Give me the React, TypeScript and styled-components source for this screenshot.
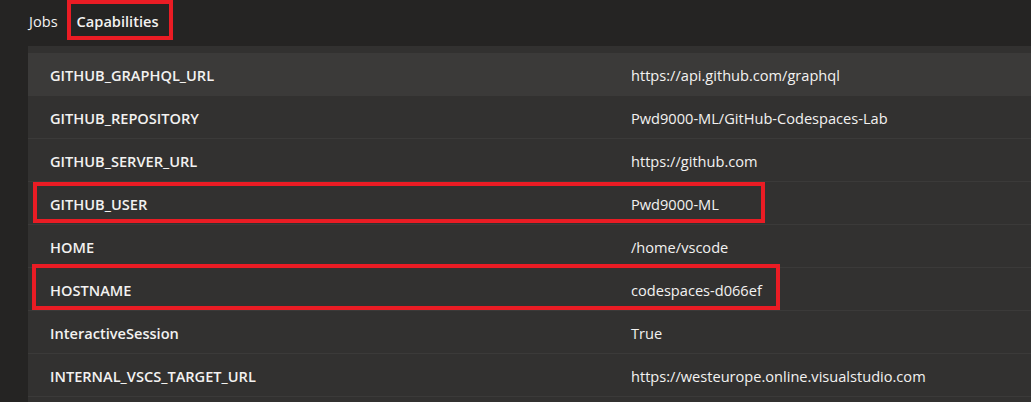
import styled, { createGlobalStyle } from "styled-components";

const GlobalStyle = createGlobalStyle`
  html, body {
    margin: 0;
    padding: 0;
    background: #252423;
    overflow: hidden;
  }
  body {
    font-family: "Open Sans", "Noto Sans", "Liberation Sans", sans-serif;
    color: #f3f2f1;
  }
`;

const Page = styled.div`
  width: 1031px;
  height: 402px;
  background: #252423;
  overflow: hidden;
`;

const Tabs = styled.div`
  display: flex;
  align-items: center;
  height: 46px;
  padding-left: 29px;
  gap: 19px;
`;

const Tab = styled.div<{ $active?: boolean }>`
  position: relative;
  font-size: 14.6px;
  font-weight: ${(p) => (p.$active ? 600 : 400)};
  color: #f3f2f1;
  padding-bottom: 4px;
`;

const Marker = styled.div<{ $top: number; $left: number; $width: number; $height: number }>`
  position: absolute;
  top: ${(p) => p.$top}px;
  left: ${(p) => p.$left}px;
  width: ${(p) => p.$width}px;
  height: ${(p) => p.$height}px;
  border: 4px solid #ea1c24;
  box-sizing: border-box;
  pointer-events: none;
`;

const Panel = styled.div`
  margin-left: 28px;
  background: #323130;
  padding-top: 7px;
  height: 356px;
`;

const Row = styled.div<{ $hover?: boolean }>`
  position: relative;
  display: flex;
  align-items: center;
  height: 42px;
  padding-left: 22px;
  border-bottom: 1px solid #3b3a39;
  background: ${(p) => (p.$hover ? "#3b3a39" : "transparent")};
  font-size: 14.6px;
  padding-top: 1px;
  box-sizing: border-box;
  height: 43px;
`;

const Key = styled.div`
  width: 581px;
  font-weight: 600;
`;

const Value = styled.div`
  font-weight: 400;
`;

const rows = [
  ["GITHUB_GRAPHQL_URL", "https://api.github.com/graphql"],
  ["GITHUB_REPOSITORY", "Pwd9000-ML/GitHub-Codespaces-Lab"],
  ["GITHUB_SERVER_URL", "https://github.com"],
  ["GITHUB_USER", "Pwd9000-ML"],
  ["HOME", "/home/vscode"],
  ["HOSTNAME", "codespaces-d066ef"],
  ["InteractiveSession", "True"],
  ["INTERNAL_VSCS_TARGET_URL", "https://westeurope.online.visualstudio.com"],
];

const marks: Record<string, { top: number; left: number; width: number; height: number }> = {
  GITHUB_USER: { top: 0, left: 5, width: 732, height: 41 },
  HOSTNAME: { top: -4, left: 4, width: 748, height: 46 },
};

export default function App() {
  return (
    <Page>
      <GlobalStyle />
      <Tabs>
        <Tab>Jobs</Tab>
        <Tab $active>
          Capabilities
          <Marker $top={-11} $left={-10} $width={106} $height={40} />
        </Tab>
      </Tabs>
      <Panel>
        {rows.map(([k, v], i) => (
          <Row key={k} $hover={i === 0}>
            <Key>{k}</Key>
            <Value>{v}</Value>
            {marks[k] && (
              <Marker
                $top={marks[k].top}
                $left={marks[k].left}
                $width={marks[k].width}
                $height={marks[k].height}
              />
            )}
          </Row>
        ))}
      </Panel>
    </Page>
  );
}
